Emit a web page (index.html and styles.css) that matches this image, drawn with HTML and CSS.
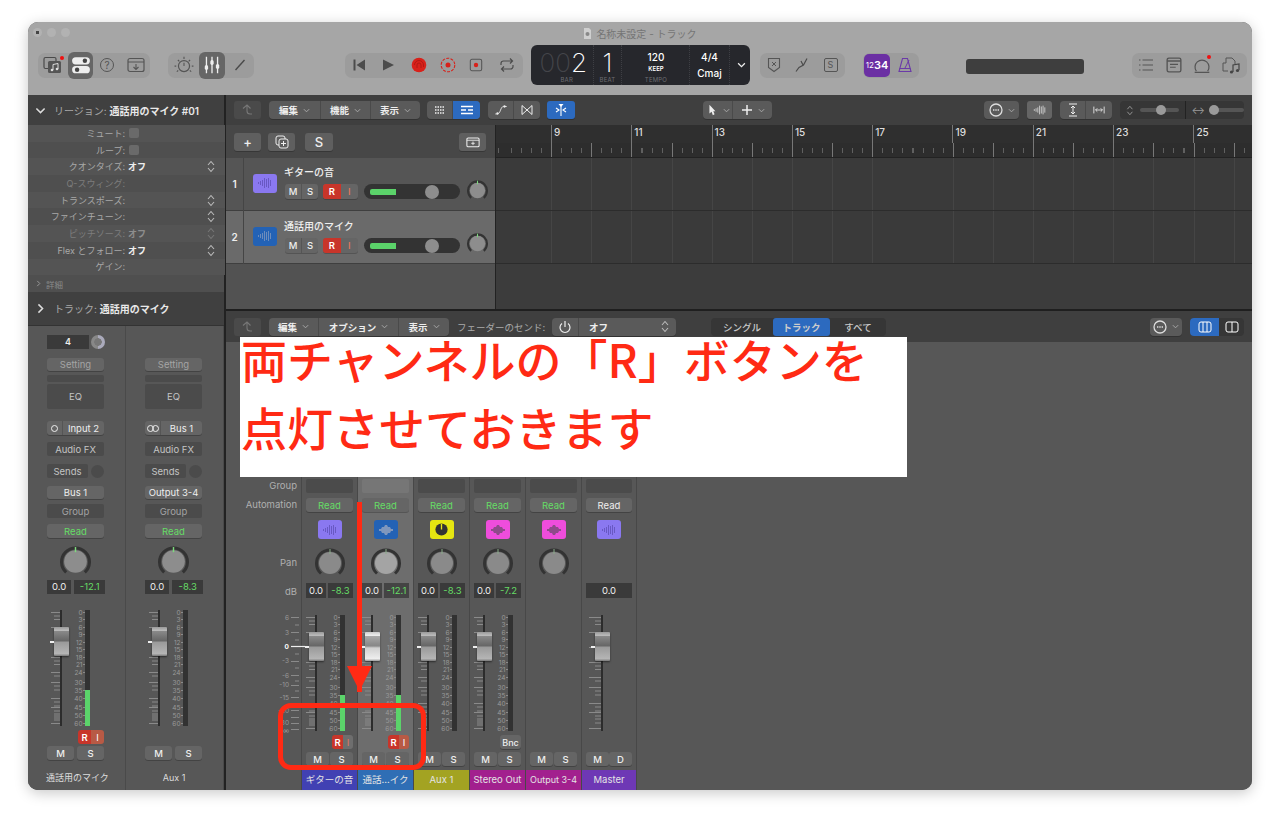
FILE: index.html
```html
<!DOCTYPE html>
<html lang="ja">
<head>
<meta charset="utf-8">
<title>名称未設定 - トラック</title>
<link rel="stylesheet" href="styles.css">
</head>
<body>
<svg class="defs" width="0" height="0">
  <symbol id="wave" viewBox="0 0 16 12"><path d="M1.500 5v2M3.500 4v4M5.500 3v6M7.500 1v10M9.500 2v8M11.500 1v10M13.500 3v6" fill="none" stroke="currentColor" stroke-width=".8"/></symbol>
  <symbol id="blob" viewBox="0 0 16 12"><path d="M1 5h2l1-2h2l1-2h2l1 2h2l1 2h2v2h-2l-1 2h-2l-1 2h-2l-1-2h-2l-1-2h-2z" fill="currentColor"/></symbol>
  <symbol id="knob" viewBox="0 0 30 30"><path d="M6 25.500A13.500 13.500 0 1 1 24 25.500" fill="none" stroke="#333" stroke-width="3"/><circle cx="15" cy="15" r="11" fill="currentColor"/><path d="M15 1v5" stroke="#8a8" stroke-width="1"/></symbol>
  <symbol id="mknob" viewBox="0 0 30 30"><path d="M6 25.500A13.500 13.500 0 1 1 24 25.500" fill="none" stroke="#333" stroke-width="3"/><circle cx="15" cy="15" r="11" fill="currentColor"/><path d="M15 1v5" stroke="#7ddb7d" stroke-width="1.400"/></symbol>
  <symbol id="dots" viewBox="0 0 14 14"><circle cx="7" cy="7" r="6" fill="none" stroke="currentColor" stroke-width="1.300"/><path d="M4 7h1.400M6.300 7h1.400M8.600 7H10" stroke="currentColor" stroke-width="1.400"/></symbol>
  <symbol id="chev" viewBox="0 0 8 5"><path d="M1 1l3 3 3-3" fill="none" stroke="currentColor" stroke-width="1.100"/></symbol>
  <symbol id="updown" viewBox="0 0 8 13"><path d="M1 5l3-3.500L7 5M1 8l3 3.500L7 8" fill="none" stroke="currentColor" stroke-width="1.100"/></symbol>
  <symbol id="back" viewBox="0 0 14 14"><path d="M2 5.500L6 2l3.500 3.500M6 2v6c0 2 1 3 3 3h2" fill="none" stroke="currentColor" stroke-width="1.100"/></symbol>
  <symbol id="fader" viewBox="0 0 46 122">
    <g fill="none" stroke="#8a8a8a" stroke-width="1">
      <path d="M-3 4.500h12M3 8h6M3 11.500h6M-3 19.500h12M3 23h6M3 26.500h6M-3 34.500h12M3 38h6M3 41.500h6M-3 49.500h12M3 53h6M3 56.500h6M-3 64.500h12M3 68h6M-3 74.500h12M3 78h6M3 82h6M-3 90.500h12M3 94h6M3 98h6M-3 99.500h12M3 103h6M3 106h6M3 108h6M3 110h6M3 112h6M-3 115.500h12"/>
      <path d="M32 4.500h2M32 11.500h2M32 19.500h2M32 26.500h2M32 34.500h2M32 41.500h2M32 49.500h2M32 56.500h2M32 64.500h2M32 74.500h2M32 82.500h2M32 90.500h2M32 99.500h2M32 107.500h2M32 115.500h2"/>
    </g>
    <rect x="9" y="2" width="2" height="116" fill="#2c2c2c"/>
  </symbol>
  <symbol id="masterfader" viewBox="0 0 46 122">
    <g fill="none" stroke="#8a8a8a" stroke-width="1">
      <path d="M3 4.500h12M9 8h6M9 11.500h6M3 19.500h12M9 23h6M9 26.500h6M3 34.500h12M9 38h6M9 41.500h6M3 49.500h12M9 53h6M9 56.500h6M3 64.500h12M9 68h6M3 74.500h12M9 78h6M9 82h6M3 90.500h12M9 94h6M9 98h6M3 99.500h12M9 103h6M9 106h6M9 110h6M3 115.500h12"/>
    </g>
    <rect x="15" y="2" width="2" height="116" fill="#2c2c2c"/>
  </symbol>
</svg>

<div class="window">
  <header class="titlebar">
    <div class="title-row">
      <div class="lights"><i class="light first"></i><i class="light"></i><i class="light"></i></div>
      <div class="doc-title">
        <svg class="doc" viewBox="0 0 9 11"><path d="M1 0h5l2 2v9H1z" fill="#cfcfcf"/><circle cx="4.500" cy="6" r="2" fill="#888"/></svg>
        名称未設定 - トラック
      </div>
    </div>
    <div class="tool-row">
      <div class="tgroup">
        <span class="tcell w30 notify">
          <svg viewBox="0 0 20 18" class="ic20"><rect x="1" y="1.500" width="12" height="11" rx="1.500" fill="none" stroke="#4a4a4a" stroke-width="1.200"/><rect x="5" y="5" width="13" height="12" rx="1.500" fill="#555"/><path d="M10 14V8.500l5-1V13" fill="none" stroke="#ddd" stroke-width="1"/><circle cx="9" cy="14" r="1.300" fill="#ddd"/><circle cx="14" cy="13" r="1.300" fill="#ddd"/></svg>
        </span>
        <span class="tcell w25 on">
          <svg viewBox="0 0 18 18" class="ic20"><rect x="1" y="2" width="16" height="6.500" rx="3.250" fill="#eee"/><circle cx="12.500" cy="5.250" r="2" fill="#444"/><rect x="1" y="10" width="16" height="6.500" rx="3.250" fill="#eee"/><circle cx="5.500" cy="13.250" r="2" fill="#444"/></svg>
        </span>
        <span class="tcell w28"><span class="qmark">?</span></span>
        <span class="tcell w29">
          <svg viewBox="0 0 18 16" class="ic18"><rect x="1" y="1.500" width="16" height="13" rx="2" fill="none" stroke="#555" stroke-width="1.200"/><path d="M1 5h16" stroke="#555"/><path d="M9 7v5M6.500 10L9 12.500 11.500 10" fill="none" stroke="#555" stroke-width="1.100"/></svg>
        </span>
      </div>
      <div class="tgroup g2">
        <span class="tcell w31">
          <svg viewBox="0 0 18 18" class="ic20"><circle cx="9" cy="10" r="5" fill="none" stroke="#555" stroke-width="1.100"/><path d="M9 10V7M9 1.500v2M2 10H.5M17.500 10H16M3.500 4.500l1.300 1.300M14.500 4.500l-1.300 1.300M2.500 15l1.300-1M15.500 15l-1.300-1" stroke="#555" stroke-width="1"/></svg>
        </span>
        <span class="tcell w26 on">
          <svg viewBox="0 0 18 18" class="ic20"><path d="M4 1.500v15M9 1.500v15M14 1.500v15" stroke="#eee" stroke-width="1.200"/><rect x="2.500" y="9" width="3" height="4.500" rx="1.500" fill="#eee"/><rect x="7.500" y="4.500" width="3" height="4.500" rx="1.500" fill="#eee"/><rect x="12.500" y="8" width="3" height="4.500" rx="1.500" fill="#eee"/></svg>
        </span>
        <span class="tcell w29">
          <svg viewBox="0 0 14 14" class="ic14"><path d="M2.500 12L11.500 2" stroke="#4a4a4a" stroke-width="1.400"/></svg>
        </span>
      </div>
      <div class="tgroup g3">
        <span class="tcell w27"><svg viewBox="0 0 14 14" class="ic14"><path d="M1.500 1.500h2v11h-2zM13 1.500v11L4.500 7z" fill="#4c4c4c"/></svg></span>
        <span class="tcell w31"><svg viewBox="0 0 14 14" class="ic14"><path d="M2 1.500v11L13 7z" fill="#4c4c4c"/></svg></span>
        <span class="tcell w31"><svg viewBox="0 0 16 16" class="ic16"><circle cx="8" cy="8" r="7.300" fill="#d8211a"/><path d="M3.500 8a4.500 4.500 0 0 1 9 0v2M6 11V8a2 2 0 0 1 4 0v3" fill="none" stroke="#a81712" stroke-width=".8"/></svg></span>
        <span class="tcell w28"><svg viewBox="0 0 16 16" class="ic16"><circle cx="8" cy="8" r="6.800" fill="none" stroke="#d8211a" stroke-width="1.100" stroke-dasharray="3 1.300"/><circle cx="8" cy="8" r="2.500" fill="#d8211a"/></svg></span>
        <span class="tcell w28"><svg viewBox="0 0 16 16" class="ic14"><rect x="1.500" y="1.500" width="13" height="13" rx="2" fill="none" stroke="#555" stroke-width="1.200"/><circle cx="8" cy="8" r="2.500" fill="#d8211a"/></svg></span>
        <span class="tcell w33"><svg viewBox="0 0 16 16" class="ic16"><path d="M2 8V6.500A2.500 2.500 0 0 1 4.500 4H13M11 1.500L13.500 4 11 6.500M14 8v1.500A2.500 2.500 0 0 1 11.500 12H3M5 9.500L2.500 12 5 14.500" fill="none" stroke="#4c4c4c" stroke-width="1.200"/></svg></span>
      </div>
      <div class="lcd">
        <div class="lcd-sec bar"><div class="digits"><span class="dim">00</span>2</div><small>BAR</small></div>
        <div class="lcd-sec beat"><div class="digits">1</div><small>BEAT</small></div>
        <div class="lcd-sec tempo"><b>120</b><em>KEEP</em><small>TEMPO</small></div>
        <div class="lcd-sec sig"><b>4/4</b><b class="key">Cmaj</b></div>
        <svg class="lcd-chev"><use href="#chev"/></svg>
      </div>
      <div class="tgroup g4">
        <span class="tcell w27"><svg viewBox="0 0 14 16" class="ic16"><path d="M1.500 1.500h11v9L7 14.500 1.500 10.500z" fill="none" stroke="#555" stroke-width="1.100"/><path d="M5 5l4 4M9 5L5 9" stroke="#555"/></svg></span>
        <span class="tcell w29"><svg viewBox="0 0 16 16" class="ic16"><path d="M13 1.500L9.500 8 5 10.500 2 14.500M7 4l2 4" fill="none" stroke="#4c4c4c" stroke-width="1.200"/></svg></span>
        <span class="tcell w29"><span class="sbox">S</span></span>
      </div>
      <div class="tgroup g5">
        <span class="count"><small>12</small>34</span>
        <span class="tcell w29"><svg viewBox="0 0 16 16" class="ic16"><path d="M5.500 1.500h5L14 14.500H2z" fill="none" stroke="#6b3aa8" stroke-width="1.100"/><path d="M2.500 11.500h11M8 11L12 3" stroke="#6b3aa8" stroke-width="1"/></svg></span>
      </div>
      <div class="status"></div>
      <div class="tgroup g6">
        <span class="tcell w27"><svg viewBox="0 0 16 14" class="ic16"><path d="M1 2h1.500M4.500 2H15M1 7h1.500M4.500 7H15M1 12h1.500M4.500 12H15" stroke="#555" stroke-width="1.200"/></svg></span>
        <span class="tcell w29"><svg viewBox="0 0 14 14" class="ic16"><rect x="1" y="1" width="12" height="12" rx="1.500" fill="none" stroke="#555" stroke-width="1.200"/><path d="M1 3.500h12" stroke="#555" stroke-width="1.500"/><path d="M3.500 6.500h7M3.500 9h5" stroke="#555"/></svg></span>
        <span class="tcell w28 notify2"><svg viewBox="0 0 16 16" class="ic18"><path d="M3 13.500a6.200 6.200 0 1 1 10 0M1.500 14.500h13" fill="none" stroke="#555" stroke-width="1.100"/></svg></span>
        <span class="tcell w31"><svg viewBox="0 0 20 18" class="ic20"><path d="M1 7h3V2h6l3 3v3M1 7v8h5" fill="none" stroke="#555" stroke-width="1"/><path d="M11 16V9l6-1v6" fill="none" stroke="#444" stroke-width="1.200"/><circle cx="9.500" cy="16" r="1.600" fill="#444"/><circle cx="15.500" cy="14.500" r="1.600" fill="#444"/></svg></span>
      </div>
    </div>
  </header>

  <div class="body">
    <aside class="inspector">
      <div class="ins-head"><svg class="ins-chev"><use href="#chev"/></svg><span class="dimlabel">リージョン:</span>&nbsp;<b>通話用のマイク #01</b></div>
      <div class="irow"><label>ミュート:</label><i class="check"></i></div>
      <div class="irow"><label>ループ:</label><i class="check"></i></div>
      <div class="irow"><label>クオンタイズ:</label><b>オフ</b><svg class="step"><use href="#updown"/></svg></div>
      <div class="irow off"><label>Q-スウィング:</label></div>
      <div class="irow"><label>トランスポーズ:</label><svg class="step"><use href="#updown"/></svg></div>
      <div class="irow"><label>ファインチューン:</label><svg class="step"><use href="#updown"/></svg></div>
      <div class="irow off"><label>ピッチソース:</label><b>オフ</b><svg class="step"><use href="#updown"/></svg></div>
      <div class="irow"><label>Flex とフォロー:</label><b>オフ</b><svg class="step"><use href="#updown"/></svg></div>
      <div class="irow"><label>ゲイン:</label></div>
      <div class="idetail"><svg class="det-chev"><use href="#chev"/></svg>詳細</div>
      <div class="ins-head trackhead"><svg class="ins-chev side"><use href="#chev"/></svg><span class="dimlabel">トラック:</span>&nbsp;<b>通話用のマイク</b></div>
      <div class="ins-strips">
        <div class="istrip">
          <div class="i-top"><span class="num4">4</span><span class="ring"></span></div>
          <div class="btn i-setting dimtext">Setting</div>
          <div class="band i-band"></div>
          <div class="band i-eq">EQ</div>
          <div class="btn split i-input"><span class="io"><i class="o1"></i></span><span>Input 2</span></div>
          <div class="band i-fx">Audio FX</div>
          <div class="i-sends"><span class="band">Sends</span><i class="sendknob"></i></div>
          <div class="btn i-bus">Bus 1</div>
          <div class="band i-group dimtext">Group</div>
          <div class="btn i-read green">Read</div>
          <svg class="i-knob"><use href="#mknob"/></svg>
          <div class="dbrow i-db"><span>0.0</span><span class="green">-12.1</span></div>
          <div class="fader i-fader"><svg class="fsvg"><use href="#fader"/><g class="scale" text-anchor="end"><text x="31.500" y="7">0</text><text x="31.500" y="14">3</text><text x="31.500" y="22">6</text><text x="31.500" y="29">9</text><text x="31.500" y="37">12</text><text x="31.500" y="44">15</text><text x="31.500" y="52">18</text><text x="31.500" y="59">21</text><text x="31.500" y="67">24</text><text x="31.500" y="77">30</text><text x="31.500" y="85">35</text><text x="31.500" y="93">40</text><text x="31.500" y="102">45</text><text x="31.500" y="110">50</text><text x="31.500" y="118">60</text></g></svg><i class="cap"></i><div class="meter"><i class="lvl l36"></i></div></div>
          <div class="ri i-ri"><span class="r">R</span><span class="i lit">I</span></div>
          <div class="ms i-ms"><span class="btn">M</span><span class="btn">S</span></div>
          <div class="i-name">通話用のマイク</div>
        </div>
        <div class="istrip">
          <div class="i-top"></div>
          <div class="btn i-setting dimtext">Setting</div>
          <div class="band i-band"></div>
          <div class="band i-eq">EQ</div>
          <div class="btn split i-input"><span class="io"><i class="o1"></i><i class="o2"></i></span><span>Bus 1</span></div>
          <div class="band i-fx">Audio FX</div>
          <div class="i-sends"><span class="band">Sends</span><i class="sendknob"></i></div>
          <div class="btn i-bus">Output 3-4</div>
          <div class="band i-group dimtext">Group</div>
          <div class="btn i-read green">Read</div>
          <svg class="i-knob"><use href="#mknob"/></svg>
          <div class="dbrow i-db"><span>0.0</span><span class="green">-8.3</span></div>
          <div class="fader i-fader"><svg class="fsvg"><use href="#fader"/><g class="scale" text-anchor="end"><text x="31.500" y="7">0</text><text x="31.500" y="14">3</text><text x="31.500" y="22">6</text><text x="31.500" y="29">9</text><text x="31.500" y="37">12</text><text x="31.500" y="44">15</text><text x="31.500" y="52">18</text><text x="31.500" y="59">21</text><text x="31.500" y="67">24</text><text x="31.500" y="77">30</text><text x="31.500" y="85">35</text><text x="31.500" y="93">40</text><text x="31.500" y="102">45</text><text x="31.500" y="110">50</text><text x="31.500" y="118">60</text></g></svg><i class="cap"></i><div class="meter"></div></div>
          <div class="ri i-ri"></div>
          <div class="ms i-ms"><span class="btn">M</span><span class="btn">S</span></div>
          <div class="i-name">Aux 1</div>
        </div>
      </div>
    </aside>

    <main class="main">
      <section class="tracks">
        <div class="toolbar">
          <span class="btn tbback"><svg class="ic14"><use href="#back"/></svg></span>
          <div class="seg seg3">
            <span class="segi w52"><b>編集</b><svg class="ch"><use href="#chev"/></svg></span>
            <span class="segi w50"><b>機能</b><svg class="ch"><use href="#chev"/></svg></span>
            <span class="segi w49"><b>表示</b><svg class="ch"><use href="#chev"/></svg></span>
          </div>
          <div class="seg sview">
            <span class="segi w26"><svg viewBox="0 0 12 9" class="ic12"><path d="M1 1.500h10M1 4.500h10M1 7.500h10" stroke="#eee" stroke-width="1.500" stroke-dasharray="1.500 1"/></svg></span>
            <span class="segi w27 blue"><svg viewBox="0 0 14 9" class="ic14"><path d="M1 1h12M1 4.500h5M8 4.500h5M1 8h12" stroke="#fff" stroke-width="1.500"/></svg></span>
          </div>
          <div class="seg scurve">
            <span class="segi w26"><svg viewBox="0 0 16 12" class="ic14"><path d="M1.500 10.500h2C8 10.500 7 2 11 2h3.500" fill="none" stroke="#eee"/><circle cx="4" cy="10" r="1.300" fill="#eee"/><circle cx="12" cy="2" r="1.300" fill="#eee"/></svg></span>
            <span class="segi w26"><svg viewBox="0 0 14 12" class="ic14"><path d="M2 1.500L12 10.500V1.500L2 10.500z" fill="none" stroke="#eee"/></svg></span>
          </div>
          <span class="btn snap blue"><svg viewBox="0 0 14 14" class="ic14"><path d="M7 1v12M2 5l3 2-3 2M12 5L9 7l3 2" fill="none" stroke="#fff" stroke-width="1.100"/><path d="M4.500 1h5L7 4z" fill="#fff"/></svg></span>
          <div class="seg stools">
            <span class="segi w30"><svg viewBox="0 0 10 14" class="ic12"><path d="M2 1v10l2.500-2L6 13l2-1-1.500-3.500H9z" fill="#eee"/></svg><svg class="ch"><use href="#chev"/></svg></span>
            <span class="segi w39"><svg viewBox="0 0 12 12" class="ic12"><path d="M6 1v10M1 6h10" stroke="#eee" stroke-width="1.500"/></svg><svg class="ch"><use href="#chev"/></svg></span>
          </div>
          <div class="seg sdots"><span class="segi w35"><svg class="ic14"><use href="#dots"/></svg><svg class="ch"><use href="#chev"/></svg></span></div>
          <span class="btn swave"><svg class="ic14"><use href="#wave"/></svg></span>
          <div class="seg szoom">
            <span class="segi w26"><svg viewBox="0 0 12 14" class="ic14"><path d="M2 1h8M2 13h8M6 3v8M4 5l2-2 2 2M4 9l2 2 2-2" fill="none" stroke="#eee"/></svg></span>
            <span class="segi w26"><svg viewBox="0 0 14 10" class="ic12"><path d="M1 1v8M13 1v8M3 5h8M5 3L3 5l2 2M9 3l2 2-2 2" fill="none" stroke="#eee"/></svg></span>
          </div>
          <div class="seg ssliders">
            <svg class="step light2"><use href="#updown"/></svg>
            <span class="slide s1"><i></i></span>
            <span class="sep"></span>
            <span class="harr">↔</span>
            <span class="slide s2"><i></i></span>
          </div>
        </div>
        <div class="tracks-body">
          <div class="tlist">
            <div class="tlist-head">
              <span class="btn hb w26b">+</span>
              <span class="btn hb w27b"><svg viewBox="0 0 14 14" class="ic14"><rect x="1" y="1" width="9" height="9" rx="2" fill="none" stroke="#eee"/><rect x="4" y="4" width="9" height="9" rx="2" fill="#5c5c5c" stroke="#eee"/><path d="M8.500 6v5M6 8.500h5" stroke="#eee"/></svg></span>
              <span class="btn hb w28b">S</span>
              <span class="btn hb w27b last"><svg viewBox="0 0 16 13" class="ic14"><rect x="1" y="2" width="14" height="10" rx="1.500" fill="none" stroke="#eee" stroke-width="1.200"/><path d="M1 4.500h14M8 6v4M6 8h4" stroke="#eee"/></svg></span>
            </div>
            <div class="track">
              <span class="tnum">1</span>
              <span class="ticon violet"><svg><use href="#wave"/></svg></span>
              <div class="tinfo">
                <div class="tname">ギターの音</div>
                <div class="tctrl">
                  <span class="ms2"><span>M</span><span>S</span></span>
                  <span class="ri2"><span class="r">R</span><span class="i">I</span></span>
                  <span class="vol"><i class="vg"></i><i class="vt"></i></span>
                </div>
              </div>
              <svg class="tknob"><use href="#mknob"/></svg>
            </div>
            <div class="track sel">
              <span class="tnum">2</span>
              <span class="ticon bluei"><svg><use href="#wave"/></svg></span>
              <div class="tinfo">
                <div class="tname">通話用のマイク</div>
                <div class="tctrl">
                  <span class="ms2"><span>M</span><span>S</span></span>
                  <span class="ri2"><span class="r">R</span><span class="i">I</span></span>
                  <span class="vol"><i class="vg"></i><i class="vt"></i></span>
                </div>
              </div>
              <svg class="tknob"><use href="#mknob"/></svg>
            </div>
          </div>
          <div class="timeline">
            <div class="ruler">
              <div class="bars"><span>9</span><span>11</span><span>13</span><span>15</span><span>17</span><span>19</span><span>21</span><span>23</span><span>25</span></div>
              <div class="beats"></div>
            </div>
            <div class="lane"></div>
            <div class="lane"></div>
            <div class="lane last"></div>
          </div>
        </div>
      </section>

      <section class="mixer">
        <div class="toolbar mtool">
          <span class="btn tbback"><svg class="ic14"><use href="#back"/></svg></span>
          <div class="seg mseg">
            <span class="segi w50"><b>編集</b><svg class="ch"><use href="#chev"/></svg></span>
            <span class="segi w80"><b>オプション</b><svg class="ch"><use href="#chev"/></svg></span>
            <span class="segi w50"><b>表示</b><svg class="ch"><use href="#chev"/></svg></span>
          </div>
          <span class="mlabel">フェーダーのセンド:</span>
          <div class="seg sendsel">
            <span class="segi w27"><svg viewBox="0 0 14 14" class="ic14"><path d="M4 3.500a5 5 0 1 0 6 0M7 1v6" fill="none" stroke="#eee" stroke-width="1.200"/></svg></span>
            <span class="segi w97"><b>オフ</b><svg class="step"><use href="#updown"/></svg></span>
          </div>
          <div class="seg mode">
            <span class="modei w62">シングル</span>
            <span class="modei w57 blue">トラック</span>
            <span class="modei w56">すべて</span>
          </div>
          <div class="seg sdots2"><span class="segi w32"><svg class="ic14"><use href="#dots"/></svg><svg class="ch"><use href="#chev"/></svg></span></div>
          <div class="seg sviews">
            <span class="segi w29 blue"><svg viewBox="0 0 14 12" class="ic14"><rect x="1" y="1" width="12" height="10" rx="2" fill="none" stroke="#fff"/><path d="M5 1v10M9 1v10" stroke="#fff"/></svg></span>
            <span class="segi w25"><svg viewBox="0 0 14 12" class="ic14"><rect x="1" y="1" width="12" height="10" rx="2" fill="none" stroke="#fff"/><path d="M7 1v10" stroke="#fff"/></svg></span>
          </div>
        </div>
        <div class="strips">
          <div class="labels">
            <div class="l-group">Group</div>
            <div class="l-auto">Automation</div>
            <div class="l-pan">Pan</div>
            <div class="l-db">dB</div>
            <svg class="lscale" viewBox="0 0 46 122">
              <g class="scale" text-anchor="end">
                <text x="30" y="7">6</text><text x="30" y="22">3</text><text x="30" y="36" class="zero">0</text><text x="30" y="50">-3</text><text x="30" y="65">-6</text><text x="30" y="74">-10</text><text x="30" y="87">-15</text><text x="30" y="100">-20</text><text x="30" y="112">-30</text><text x="30" y="120">∞</text>
              </g>
              <g stroke="#8a8a8a"><path d="M32 4.500h8M32 19.500h8M32 48.500h8M32 62.500h8M32 72.500h8M32 84.500h8M32 97.500h8M32 104.500h8M32 110.500h8M32 116.500h8M36 12h4M36 27h4M36 41h4M36 55h4M36 68h4M36 78h4M36 91h4"/></g>
              <path d="M32 33.500h14" stroke="#eee" stroke-width="1.200"/>
            </svg>
          </div>

          <div class="strip">
            <div class="band s-group"></div>
            <div class="btn s-read green">Read</div>
            <span class="ticon s-icon violet"><svg><use href="#wave"/></svg></span>
            <svg class="s-knob"><use href="#knob"/></svg>
            <div class="dbrow s-db"><span>0.0</span><span class="green">-8.3</span></div>
            <div class="fader s-fader"><svg class="fsvg"><use href="#fader"/><g class="scale" text-anchor="end"><text x="31.500" y="7">0</text><text x="31.500" y="14">3</text><text x="31.500" y="22">6</text><text x="31.500" y="29">9</text><text x="31.500" y="37">12</text><text x="31.500" y="44">15</text><text x="31.500" y="52">18</text><text x="31.500" y="59">21</text><text x="31.500" y="67">24</text><text x="31.500" y="77">30</text><text x="31.500" y="85">35</text><text x="31.500" y="93">40</text><text x="31.500" y="102">45</text><text x="31.500" y="110">50</text><text x="31.500" y="118">60</text></g></svg><i class="cap"></i><div class="meter"><i class="lvl l36"></i></div></div>
            <div class="ri s-ri"><span class="r">R</span><span class="i">I</span></div>
            <div class="ms s-ms"><span class="btn">M</span><span class="btn">S</span></div>
            <div class="s-name n-indigo">ギターの音</div>
          </div>

          <div class="strip selected">
            <div class="band s-group"></div>
            <div class="btn s-read green">Read</div>
            <span class="ticon s-icon bluei"><svg><use href="#blob"/></svg></span>
            <svg class="s-knob"><use href="#knob"/></svg>
            <div class="dbrow s-db"><span>0.0</span><span class="green">-12.1</span></div>
            <div class="fader s-fader"><svg class="fsvg"><use href="#fader"/><g class="scale" text-anchor="end"><text x="31.500" y="7">0</text><text x="31.500" y="14">3</text><text x="31.500" y="22">6</text><text x="31.500" y="29">9</text><text x="31.500" y="37">12</text><text x="31.500" y="44">15</text><text x="31.500" y="52">18</text><text x="31.500" y="59">21</text><text x="31.500" y="67">24</text><text x="31.500" y="77">30</text><text x="31.500" y="85">35</text><text x="31.500" y="93">40</text><text x="31.500" y="102">45</text><text x="31.500" y="110">50</text><text x="31.500" y="118">60</text></g></svg><i class="cap light"></i><div class="meter"><i class="lvl l36"></i></div></div>
            <div class="ri s-ri"><span class="r">R</span><span class="i lit">I</span></div>
            <div class="ms s-ms"><span class="btn">M</span><span class="btn">S</span></div>
            <div class="s-name n-blue">通話...イク</div>
          </div>

          <div class="strip">
            <div class="band s-group"></div>
            <div class="btn s-read green">Read</div>
            <span class="ticon s-icon yellow"><svg viewBox="0 0 16 16"><circle cx="8" cy="8" r="6.500" fill="#333"/><path d="M8 2v6" stroke="#e8e81a" stroke-width="1.400"/></svg></span>
            <svg class="s-knob"><use href="#knob"/></svg>
            <div class="dbrow s-db"><span>0.0</span><span class="green">-8.3</span></div>
            <div class="fader s-fader"><svg class="fsvg"><use href="#fader"/><g class="scale" text-anchor="end"><text x="31.500" y="7">0</text><text x="31.500" y="14">3</text><text x="31.500" y="22">6</text><text x="31.500" y="29">9</text><text x="31.500" y="37">12</text><text x="31.500" y="44">15</text><text x="31.500" y="52">18</text><text x="31.500" y="59">21</text><text x="31.500" y="67">24</text><text x="31.500" y="77">30</text><text x="31.500" y="85">35</text><text x="31.500" y="93">40</text><text x="31.500" y="102">45</text><text x="31.500" y="110">50</text><text x="31.500" y="118">60</text></g></svg><i class="cap"></i><div class="meter"></div></div>
            <div class="ri s-ri"></div>
            <div class="ms s-ms"><span class="btn">M</span><span class="btn">S</span></div>
            <div class="s-name n-olive">Aux 1</div>
          </div>

          <div class="strip">
            <div class="band s-group"></div>
            <div class="btn s-read green">Read</div>
            <span class="ticon s-icon pink"><svg><use href="#blob"/></svg></span>
            <svg class="s-knob"><use href="#knob"/></svg>
            <div class="dbrow s-db"><span>0.0</span><span class="green">-7.2</span></div>
            <div class="fader s-fader"><svg class="fsvg"><use href="#fader"/><g class="scale" text-anchor="end"><text x="31.500" y="7">0</text><text x="31.500" y="14">3</text><text x="31.500" y="22">6</text><text x="31.500" y="29">9</text><text x="31.500" y="37">12</text><text x="31.500" y="44">15</text><text x="31.500" y="52">18</text><text x="31.500" y="59">21</text><text x="31.500" y="67">24</text><text x="31.500" y="77">30</text><text x="31.500" y="85">35</text><text x="31.500" y="93">40</text><text x="31.500" y="102">45</text><text x="31.500" y="110">50</text><text x="31.500" y="118">60</text></g></svg><i class="cap"></i><div class="meter"></div></div>
            <div class="ri s-ri"><span class="bnc btn">Bnc</span></div>
            <div class="ms s-ms"><span class="btn">M</span><span class="btn">S</span></div>
            <div class="s-name n-magenta">Stereo Out</div>
          </div>

          <div class="strip">
            <div class="band s-group"></div>
            <div class="btn s-read green">Read</div>
            <span class="ticon s-icon pink"><svg><use href="#blob"/></svg></span>
            <svg class="s-knob"><use href="#knob"/></svg>
            <div class="dbrow s-db"></div>
            <div class="fader s-fader"></div>
            <div class="ri s-ri"></div>
            <div class="ms s-ms"><span class="btn">M</span><span class="btn">S</span></div>
            <div class="s-name n-magenta small">Output 3-4</div>
          </div>

          <div class="strip">
            <div class="band s-group"></div>
            <div class="btn s-read">Read</div>
            <span class="ticon s-icon violet"><svg><use href="#wave"/></svg></span>
            <div class="s-knob"></div>
            <div class="dbrow s-db single"><span>0.0</span></div>
            <div class="fader s-fader"><svg class="fsvg"><use href="#masterfader"/></svg><i class="cap master"></i></div>
            <div class="ri s-ri"></div>
            <div class="ms s-ms"><span class="btn">M</span><span class="btn">D</span></div>
            <div class="s-name n-purple">Master</div>
          </div>
        </div>
      </section>
    </main>
  </div>

  <div class="note">
    <p>両チャンネルの「R」ボタンを</p>
    <p>点灯させておきます</p>
  </div>
  <div class="redbox"></div>
  <div class="arrow-line"></div>
  <div class="arrow-head"></div>
</div>
</body>
</html>
```

FILE: styles.css
```css
* { box-sizing: border-box; }
html, body { margin: 0; height: 825px; overflow: hidden; background: #fff; }
body { font-family: Inter, "Noto Sans CJK JP", sans-serif; font-size: 9px; color: #ddd; }
.defs { position: absolute; }
svg { display: block; }

.window { position: relative; width: 1224px; height: 768px; margin: 22px 28px 0; border-radius: 10px; overflow: hidden; display: flex; flex-direction: column; box-shadow: 0 3px 14px rgba(0,0,0,.22); background: #555; }

/* title bar */
.titlebar { height: 73px; background: #a6a6a6; flex: none; }
.title-row { height: 23px; position: relative; display: flex; align-items: center; justify-content: center; }
.lights { position: absolute; left: 5px; top: 6px; display: flex; gap: 5px; }
.light { width: 9px; height: 9px; border-radius: 50%; background: #b2b2b2; }
.light.first { background: radial-gradient(circle, #444 0 1.500px, #b2b2b2 2px); }
.doc-title { display: flex; align-items: center; gap: 4px; color: #757575; font-size: 10px; padding-left: 0; margin-top: -1px; }
.doc { width: 9px; height: 11px; }
.tool-row { height: 40px; display: flex; align-items: center; padding-left: 10px; }
.tgroup { display: flex; height: 25px; background: #9c9c9c; border-radius: 7px; flex: none; align-items: center; }
.g2 { margin-left: 18px; }
.g3 { margin-left: 91px; }
.g4 { margin-left: 10px; }
.g5 { margin-left: 18px; width: 56px; }
.g6 { margin-left: 48px; }
.tcell { height: 25px; display: flex; align-items: center; justify-content: center; flex: none; position: relative; }
.tcell.on { background: #666; border-radius: 6px; height: 27px; }
.w25 { width: 25px; } .w26 { width: 26px; } .w27 { width: 27px; } .w28 { width: 28px; } .w29 { width: 29px; } .w30 { width: 30px; } .w31 { width: 31px; } .w32 { width: 32px; } .w33 { width: 33px; } .w35 { width: 35px; } .w39 { width: 39px; } .w49 { width: 49px; } .w50 { width: 50px; } .w52 { width: 52px; } .w80 { width: 80px; } .w97 { width: 97px; } .w56 { width: 56px; } .w57 { width: 57px; } .w62 { width: 62px; }
.ic12 { width: 12px; height: 12px; } .ic14 { width: 14px; height: 14px; } .ic16 { width: 16px; height: 16px; } .ic18 { width: 18px; height: 18px; } .ic20 { width: 20px; height: 20px; }
.notify::after { content: ""; position: absolute; right: 4px; top: 3px; width: 4px; height: 4px; border-radius: 50%; background: #f01010; }
.notify2::after { content: ""; position: absolute; right: 5px; top: 2px; width: 4px; height: 4px; border-radius: 50%; background: #f01010; }
.qmark { width: 14px; height: 14px; border: 1.100px solid #555; border-radius: 50%; color: #555; font-size: 10px; line-height: 12px; text-align: center; }
.sbox { width: 14px; height: 14px; border: 1.100px solid #555; border-radius: 2px; color: #555; font-size: 9px; line-height: 12px; text-align: center; }
.count { width: 27px; height: 23px; margin-left: 1px; background: #6b2fa3; border-radius: 5px; color: #fff; font-size: 11px; display: flex; align-items: center; justify-content: center; font-weight: 600; }
.count small { font-size: 8px; font-weight: 400; }
.status { width: 118px; height: 15px; margin-left: 47px; background: #3e3e3e; border-radius: 3px; margin-top: 3px; }

.lcd { width: 219px; height: 40px; margin-left: 8px; background: #26272c; border-radius: 6px; display: flex; flex: none; color: #fff; position: relative; }
.lcd-sec { height: 40px; display: flex; flex-direction: column; align-items: center; border-right: 1px dotted #3e3f44; flex: none; }
.lcd-sec small { font-size: 6px; color: #6c6d72; position: absolute; bottom: 2px; letter-spacing: .2px; }
.bar { width: 63px; align-items: flex-end; position: relative; padding-right: 6px; }
.bar small { right: 20px; }
.beat { width: 28px; position: relative; }
.digits { font-size: 26px; font-weight: 200; line-height: 36px; }
.dim { color: #44454a; }
.tempo { width: 68px; position: relative; padding-left: 1px; }
.tempo b { font-size: 10px; font-weight: 500; line-height: 12px; margin-top: 6px; }
.tempo em { font-size: 6px; font-style: normal; font-weight: 600; line-height: 9px; margin-top: 1px; }
.sig { width: 40px; }
.sig b { font-size: 10px; font-weight: 500; line-height: 12px; margin-top: 6px; }
.sig .key { margin-top: 4px; }
.lcd-chev { width: 9px; height: 6px; color: #eee; margin: 17px 0 0 7px; }

/* body */
.body { flex: 1; display: flex; min-height: 0; }
.inspector { width: 197px; flex: none; background: #515151; display: flex; flex-direction: column; }
.ins-head { height: 30px; background: #404040; display: flex; align-items: center; font-size: 10px; flex: none; padding-left: 7px; }
.ins-head b { font-weight: 600; color: #e8e8e8; }
.dimlabel { color: #a8a8a8; }
.ins-chev { width: 11px; height: 7px; margin-right: 8px; color: #ddd; }
.ins-chev.side { transform: rotate(-90deg); }
.trackhead { height: 33px; }
.irow { height: 16.700px; display: flex; align-items: center; position: relative; font-size: 9px; padding-left: 96px; color: #eee; }
.irow:nth-child(even) { background: #545454; }
.irow:nth-child(odd) { background: #4f4f4f; }
.irow label { position: absolute; right: 100px; color: #a9a9a9; white-space: nowrap; }
.irow b { font-weight: 600; margin-left: 4px; }
.irow.off label, .irow.off { color: #7d7d7d; }
.irow.off b { color: #8d8d8d; }
.check { width: 10px; height: 10px; background: #6a6a6a; border-radius: 2px; margin-left: 5px; }
.step { width: 8px; height: 13px; color: #bbb; margin-left: auto; margin-right: 10px; }
.irow.off .step { color: #777; }
.idetail { height: 17px; display: flex; align-items: center; background: #4f4f4f; color: #8a8a8a; font-size: 8.500px; padding-left: 7px; gap: 4px; }
.det-chev { width: 7px; height: 5px; transform: rotate(-90deg); color: #999; }
.ins-strips { flex: 1; display: flex; background: #575757; border-top: 1px solid #333; }

.btn { background: #656565; border-radius: 3px; color: #eee; display: flex; align-items: center; justify-content: center; box-shadow: 0 1px 0 rgba(0,0,0,.22); font-size: 9.500px; flex: none; }
.band { background: #4b4b4b; border-radius: 2px; display: flex; align-items: center; justify-content: center; color: #c4c4c4; font-size: 9.500px; }
.dimtext { color: #a4a4a4; }
.green { color: #66dd66 !important; }
.blue { background: #2c6abf !important; color: #fff; }

.istrip { width: 98px; flex: none; padding: 9px 0 0 19px; border-right: 1px solid #4a4a4a; }
.istrip > * { width: 57px; }
.i-top { height: 14px; display: flex; align-items: center; width: 60px !important; position: relative; }
.num4 { width: 42px; height: 14px; background: #3a3a3a; font-size: 9px; text-align: center; line-height: 14px; font-weight: 600; color: #eee; }
.ring { width: 14px; height: 14px; margin-left: 2px; border-radius: 50%; background: radial-gradient(circle, #777 0 3.500px, transparent 4px), conic-gradient(#aab 0 50%, #888 50%); }
.i-setting { height: 13px; margin-top: 9px; }
.i-band { height: 7px; margin-top: 4px; }
.i-eq { height: 25px; margin-top: 2px; }
.i-input { height: 14px; margin-top: 12px; justify-content: flex-start; }
.io { width: 16px; height: 14px; display: flex; align-items: center; justify-content: center; border-right: 1px solid #555; flex: none; }
.split > span:last-child { flex: 1; text-align: center; }
.o1, .o2 { width: 7px; height: 7px; border: 1.200px solid #eee; border-radius: 50%; flex: none; }
.o2 { margin-left: -2px; }
.i-fx { height: 14px; margin-top: 7px; }
.i-sends { height: 14px; margin-top: 8px; display: flex; align-items: center; gap: 3px; }
.i-sends .band { width: 41px; height: 14px; flex: none; }
.sendknob { width: 13px; height: 13px; background: #4b4b4b; border-radius: 50%; }
.i-bus { height: 13px; margin-top: 8px; }
.i-group { height: 14px; margin-top: 5px; }
.i-read { height: 14px; margin-top: 6px; }
.i-knob { width: 31px !important; height: 31px; margin: 8px 0 0 13px; color: #8d8d8d; }
.dbrow { display: flex; gap: 3px; font-size: 9.500px; color: #eee; }
.dbrow span { flex: 1; background: #3a3a3a; text-align: center; line-height: 14px; }
.dbrow.single span { flex: 1; }
.i-db { height: 14px; margin-top: 3px; width: 58px !important; }
.dbrow span:last-child:not(:first-child) { flex: 1.250; }
.i-fader { margin: 14px 0 0 4px; }
.fader { position: relative; width: 46px; height: 122px; flex: none; }
.fsvg { width: 46px; height: 122px; overflow: visible; }
.scale text { font: 6.500px Inter, sans-serif; fill: #9a9a9a; }
.scale .zero { fill: #fff; font-weight: 700; }
.cap { position: absolute; left: 3px; top: 19px; width: 15px; height: 29px; border-radius: 1px; box-shadow: 0 1px 2px rgba(0,0,0,.5); background: linear-gradient(#9a9a9a 0, #bbb 12%, #8a8a8a 14%, #6e6e6e 40%, #666 48%, #9a9a9a 52%, #b5b5b5 92%, #777 100%); }
.cap::before { content: ""; position: absolute; left: -4px; top: 14px; width: 4px; height: 2px; background: #eee; }
.cap.light { background: linear-gradient(#ccc 0, #eee 12%, #aaa 14%, #8e8e8e 40%, #888 48%, #d0d0d0 55%, #eee 92%, #999 100%); }
.cap.master { left: 9px; }
.meter { position: absolute; left: 34px; top: 2px; width: 5px; height: 116px; background: #323232; display: flex; align-items: flex-end; }
.lvl { display: block; width: 100%; background: #5bd36a; }
.l36 { height: 36px; }
.ri { display: flex; justify-content: flex-end; flex: none; }
.ri > span { height: 14px; display: flex; align-items: center; justify-content: center; color: #fff; font-size: 9.500px; font-weight: 600; }
.ri .r { width: 11px; background: #c8352a; border-radius: 3px 0 0 3px; }
.ri .i { width: 10px; background: #6e6e6e; color: #e07a60; border-radius: 0 3px 3px 0; font-weight: 400; }
.ri .i.lit { background: #b85a45; color: #fff; }
.ri .bnc { width: 21px; border-radius: 3px; background: #656565; color: #eee; font-weight: 500; font-size: 9px; }
.i-ri { height: 14px; margin-top: 0; }
.i-ri .r, .i-ri .i { width: 13px; }
.i-ms, .s-ms { display: flex; justify-content: space-between; }
.ms .btn { font-weight: 500; }
.i-ms { height: 14px; margin-top: 2px; }
.i-ms .btn { width: 27px; height: 14px; }
.i-name { width: 60px !important; margin: 11px 0 0 -1px; text-align: center; color: #ddd; font-size: 9px; line-height: 14px; white-space: nowrap; }

/* main */
.main { flex: 1; min-width: 0; display: flex; flex-direction: column; border-left: 2px solid #222; margin-left: -1px; }
.tracks { height: 216px; flex: none; display: flex; flex-direction: column; border-bottom: 2px solid #1f1f1f; }
.toolbar { height: 30px; background: #3f3f3f; display: flex; align-items: center; padding-left: 8px; flex: none; }
.tbback { width: 27px; height: 18px; background: #4a4a4a; color: #777; box-shadow: none; }
.seg { display: flex; height: 18px; border-radius: 4px; background: #5a5a5a; flex: none; align-items: center; overflow: hidden; box-shadow: 0 1px 0 rgba(0,0,0,.2); }
.segi { height: 18px; display: flex; align-items: center; justify-content: center; gap: 5px; flex: none; font-size: 9.500px; border-right: 1px solid #4a4a4a; }
.segi:last-child { border-right: 0; }
.segi b { font-weight: 600; color: #eee; }
.ch { width: 7px; height: 5px; color: #aaa; flex: none; }
.seg3 { margin-left: 8px; }
.sview { margin-left: 7px; }
.scurve { margin-left: 8px; }
.snap { width: 28px; height: 18px; margin-left: 7px; }
.stools { margin-left: 128px; }
.sdots { margin-left: 212px; }
.swave { width: 25px; height: 18px; margin-left: 8px; color: #eee; }
.szoom { margin-left: 8px; }
.ssliders { margin-left: 8px; width: 124px; background: #363636; padding-left: 4px; gap: 0; box-shadow: none; }
.ssliders .step { margin: 0 6px 0 2px; height: 11px; color: #999; }
.slide { display: block; height: 4px; background: #555; border-radius: 2px; position: relative; }
.slide i { position: absolute; top: -3.500px; width: 10px; height: 10px; border-radius: 50%; background: #9a9a9a; }
.s1 { width: 40px; } .s1 i { left: 16px; }
.s2 { width: 36px; } .s2 i { left: 0; }
.sep { width: 1px; height: 18px; background: #222; margin: 0 6px; }
.harr { font-size: 10px; color: #999; margin-right: 4px; }

.tracks-body { flex: 1; display: flex; min-height: 0; }
.tlist { width: 270px; flex: none; background: #525252; border-right: 1px solid #222; }
.tlist-head { height: 33px; background: #474747; display: flex; align-items: center; padding-left: 8px; gap: 7px; }
.hb { height: 18px; font-size: 13px; font-weight: 500; background: #5f5f5f; }
.w26b { width: 27px; } .w27b { width: 27px; } .w28b { width: 28px; margin-left: 3px; }
.hb.last { margin-left: auto; margin-right: 9px; }
.track { height: 53px; display: flex; background: #555; border-bottom: 1px solid #3f3f3f; position: relative; align-items: center; }
.track.sel { background: #6a6a6a; }
.tnum { width: 18px; height: 53px; line-height: 53px; text-align: center; color: #eee; font-size: 10px; font-weight: 600; border-right: 1px solid #454545; flex: none; }
.ticon { display: flex; align-items: center; justify-content: center; width: 24px; height: 19px; border-radius: 3px; flex: none; }
.ticon svg { width: 16px; height: 12px; }
.track .ticon { margin: -2px 0 0 9px; }
.violet { background: #8a78f0; color: #5f50b8; }
.bluei { background: #2362b5; color: #7f97bd; }
.yellow { background: #e6e611; }
.yellow svg { width: 15px !important; height: 15px !important; }
.pink { background: #ef4ddc; color: #8f4a8a; }
.tinfo { margin-left: 7px; }
.sel .tinfo { padding-top: 2px; }
.tname { font-size: 10px; color: #eee; line-height: 14px; font-weight: 500; margin-top: -4px; margin-bottom: 5px; }
.tctrl { display: flex; align-items: center; }
.ms2, .ri2 { display: flex; height: 15px; border-radius: 3px; overflow: hidden; background: #656565; box-shadow: 0 1px 0 rgba(0,0,0,.2); }
.ms2 { width: 33px; margin-left: 1px; }
.ms2 span, .ri2 span { flex: 1; display: flex; align-items: center; justify-content: center; font-size: 9.500px; font-weight: 500; color: #eee; }
.ms2 span:first-child { border-right: 1px solid #555; }
.ri2 { width: 35px; margin-left: 5px; }
.ri2 .r { background: #c8352a; color: #fff; font-weight: 600; }
.ri2 .i { color: #e07a60; }
.vol { width: 96px; height: 15px; border-radius: 8px; background: #333; margin-left: 6px; position: relative; }
.vg { position: absolute; left: 6px; top: 5px; width: 26px; height: 6px; background: #5bd36a; border-radius: 2px 0 0 2px; }
.vt { position: absolute; left: 61px; top: .500px; width: 14px; height: 14px; border-radius: 50%; background: #8d8d8d; }
.tknob { position: absolute; left: 241px; top: 22px; width: 21px; height: 21px; color: #8d8d8d; }

.timeline { flex: 1; min-width: 0; background: #3a3a3a; display: flex; flex-direction: column; overflow: hidden; }
.ruler { height: 33px; flex: none; background: #2f2f2f; border-bottom: 1px solid #222; }
.bars { height: 18px; display: flex; padding-left: 55px; background: #2f2f2f; }
.bars span { width: 80.300px; flex: none; border-left: 1px solid #777; font-size: 10px; font-weight: 500; color: #ddd; padding-left: 2px; line-height: 14px; }
.beats { height: 14px; background-color: #2d2d2d; background-image: repeating-linear-gradient(90deg, transparent 0 39.150px, #777 39.150px 40.150px), repeating-linear-gradient(90deg, transparent 0 9px, #606060 9px 10.037px); background-position: 16px 0, 6px 5px; background-size: auto, auto 5px; background-repeat: repeat, repeat-x; }
.lane { height: 53px; border-bottom: 1px solid #2c2c2c; background-image: repeating-linear-gradient(90deg, transparent 0 39.150px, #454545 39.150px 40.150px); background-position: 16px 0; }
.lane.last { flex: 1; border-bottom: 0; background-image: none; background-color: #3c3c3c; }

/* mixer */
.mixer { flex: 1; min-height: 0; display: flex; flex-direction: column; background: #575757; }
.mtool { height: 31px; }
.mseg { margin-left: 8px; }
.mlabel { margin-left: 8px; color: #aaa; font-size: 9.500px; width: 95px; flex: none; white-space: nowrap; }
.sendsel { width: 124px; }
.sendsel .w97 { justify-content: flex-start; padding-left: 10px; }
.sendsel .step { margin-right: 7px; }
.mode { margin-left: 35px; width: 175px; background: #363636; box-shadow: none; }
.modei { height: 18px; display: flex; align-items: center; justify-content: center; color: #ccc; border-radius: 3px; font-size: 9.500px; font-weight: 500; flex: none; }
.modei.blue { font-weight: 600; }
.sdots2 { margin-left: 264px; }
.sviews { margin-left: 8px; background: #363636; box-shadow: none; }
.sviews .segi { border: 0; }
.strips { flex: 1; display: flex; min-height: 0; }
.labels { width: 75px; flex: none; padding-top: 137px; color: #b0b0b0; font-size: 9.500px; text-align: right; padding-right: 4px; }
.l-group { height: 14px; line-height: 14px; }
.l-auto { height: 14px; line-height: 14px; margin-top: 5px; }
.l-pan { height: 14px; line-height: 14px; margin-top: 44px; }
.l-db { height: 14px; line-height: 14px; margin-top: 15px; }
.lscale { width: 46px; height: 122px; margin: 14px -4px 0 auto; position: relative; left: 4px; }
.strip { width: 56px; flex: none; border-left: 1px solid #484848; padding: 137px 4px 0 4px; display: flex; flex-direction: column; }
.strip:last-child { border-right: 1px solid #484848; }
.strip.selected { background: #6d6d6d; }
.selected .band { background: #767676; }
.strip > * { flex: none; }
.s-group { height: 14px; }
.s-read { height: 14px; margin-top: 5px; }
.s-icon { margin: 8px auto 0; height: 19px; }
.s-knob { width: 30px; height: 30px; margin: 9px auto 0; color: #8a8a8a; }
.selected .s-knob { color: #a4a4a4; }
.s-db { height: 15px; margin-top: 5px; gap: 2px; }
.s-db span { line-height: 15px; flex: 1; }
.selected .dbrow span { background: #444; }
.s-fader { margin-top: 15px; }
.s-ri { height: 14px; }
.s-ms { height: 14px; margin-top: 3px; }
.s-ms .btn { width: 23px; height: 14px; }
.s-name { height: 20px; margin: 4px -4px 0; line-height: 20px; text-align: center; color: #e4e4e4; font-size: 9.500px; white-space: nowrap; overflow: hidden; }
.s-name.small { font-size: 9px; }
.n-indigo { background: #4141b3; } .n-blue { background: #2f6eb5; } .n-olive { background: #a3a322; } .n-magenta { background: #a2208e; } .n-purple { background: #6e38b5; }

/* annotation overlay */
.note { position: absolute; left: 212px; top: 315px; width: 667px; height: 140px; background: #fff; color: #ff2a14; font-family: "Noto Sans CJK JP", sans-serif; font-size: 46px; font-weight: 500; padding: 0 0 0 1px; }
.note p { margin: 0; height: 68px; line-height: 42px; white-space: nowrap; }
.redbox { position: absolute; left: 250px; top: 681px; width: 148px; height: 67px; border: 5px solid #ff2a14; border-radius: 13px; }
.arrow-line { position: absolute; left: 329px; top: 480px; width: 5px; height: 190px; background: #ff2a14; }
.arrow-head { position: absolute; left: 319px; top: 644px; width: 25px; height: 25px; background: #ff2a14; clip-path: polygon(0 0, 100% 0, 50% 100%); }
```
